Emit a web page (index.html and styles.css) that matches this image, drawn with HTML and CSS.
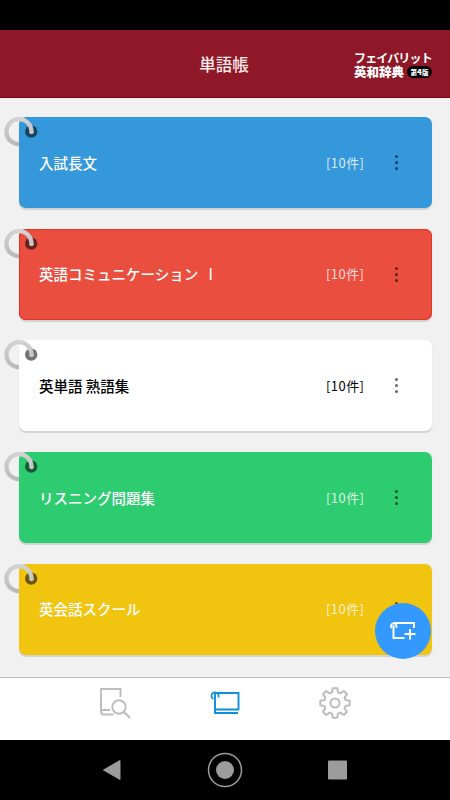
FILE: index.html
```html
<!DOCTYPE html>
<html lang="ja">
<head>
<meta charset="utf-8">
<title>単語帳</title>
<link rel="stylesheet" href="styles.css">
</head>
<body>
<svg width="0" height="0" class="defs">
  <defs>
    <linearGradient id="ringShade" x1="0" y1="0" x2="0" y2="1">
      <stop offset="0" stop-color="#d2d2d2"/><stop offset="1" stop-color="#bababa"/>
    </linearGradient>
    <symbol id="ring" viewBox="0 0 34 32">
      <circle class="hole" cx="27.2" cy="14.6" r="6.2"/>
      <path d="M27.5 15.2C27.5 7.600 22 2.200 14.700 2.200A12.400 12.400 0 1 0 15 27.100" fill="none" stroke="url(#ringShade)" stroke-width="4.300"/>
      <circle cx="27.5" cy="15.200" r="2.150" fill="#c8c8c8" fill-opacity="1"/>
    </symbol>
  </defs>
</svg>
<div class="status"></div>
<header class="header">
  <h1>単語帳</h1>
  <div class="brand">
    <div class="brand-top">フェイバリット</div>
    <div class="brand-bottom"><span>英和辞典</span><span class="edition">第<b>4</b>版</span></div>
  </div>
</header>
<main class="list">
  <article class="card blue">
    <svg class="ring"><use href="#ring"/></svg>
    <span class="title">入試長文</span><span class="count">[10件]</span><span class="more"><i></i><i></i><i></i></span>
  </article>
  <article class="card red">
    <svg class="ring"><use href="#ring"/></svg>
    <span class="title">英語コミュニケーション <span class="numeral">I</span></span><span class="count">[10件]</span><span class="more"><i></i><i></i><i></i></span>
  </article>
  <article class="card white">
    <svg class="ring"><use href="#ring"/></svg>
    <span class="title">英単語 熟語集</span><span class="count">[10件]</span><span class="more"><i></i><i></i><i></i></span>
  </article>
  <article class="card green">
    <svg class="ring"><use href="#ring"/></svg>
    <span class="title">リスニング問題集</span><span class="count">[10件]</span><span class="more"><i></i><i></i><i></i></span>
  </article>
  <article class="card yellow">
    <svg class="ring"><use href="#ring"/></svg>
    <span class="title">英会話スクール</span><span class="count">[10件]</span><span class="more"><i></i><i></i><i></i></span>
  </article>
  <div class="fab">
    <svg width="28" height="20" viewBox="0 0 28 20" fill="none" stroke="#fff" stroke-width="2">
      <path d="M4 2H25V7M4.500 4V17H15.500M21 8V18.500M15.500 13H26.500"/>
      <path d="M2.800 7.200A2.800 2.800 0 1 1 7.400 4.500V7" stroke-width="1.800"/>
    </svg>
  </div>
</main>
<nav class="tabs">
  <svg class="tab" width="32" height="32" viewBox="0 0 32 32" fill="none" stroke="#bdbdbd" stroke-width="1.900">
    <path d="M21.500 10V2H2V24.500Q2 27.500 5 27.500H14.500M2 25Q2 23 4.500 23H11"/>
    <circle cx="20" cy="20" r="6.700"/><path d="M25 25L31 31" stroke-width="2.300"/>
  </svg>
  <svg class="tab" width="32" height="32" viewBox="0 0 32 32" fill="none" stroke="#0f8edb" stroke-width="1.900">
    <path d="M6 6H29.500V22.500H6M6 6V26H29"/>
    <path d="M4.200 12A3.600 3.600 0 1 1 9.600 8.600V10.500" stroke-width="1.700"/>
  </svg>
  <svg class="tab" width="32" height="32" viewBox="-16 -16 32 32" fill="none" stroke="#bdbdbd" stroke-width="2" stroke-linejoin="round">
    <path d="M-2.300 -14.700H2.300L3 -10.600L5.400 -9.600L8.800 -12L12 -8.800L9.600 -5.400L10.600 -3L14.700 -2.300V2.300L10.600 3L9.600 5.400L12 8.800L8.800 12L5.400 9.600L3 10.600L2.300 14.700H-2.300L-3 10.600L-5.400 9.600L-8.800 12L-12 8.800L-9.600 5.400L-10.600 3L-14.700 2.300V-2.300L-10.600 -3L-9.600 -5.400L-12 -8.800L-8.800 -12L-5.400 -9.600L-3 -10.600Z"/>
    <circle r="4.500"/>
  </svg>
</nav>
<footer class="system">
  <svg width="36" height="36" viewBox="0 0 36 36"><path d="M8.500 18L25 8.500V27.500Z" fill="#9c9c9c" stroke="#9c9c9c" stroke-linejoin="round"/></svg>
  <svg width="36" height="36" viewBox="0 0 36 36"><circle cx="18" cy="18" r="16.500" fill="none" stroke="#9c9c9c" stroke-width="1.500"/><circle cx="18" cy="18" r="9" fill="#9c9c9c"/></svg>
  <svg width="36" height="36" viewBox="0 0 36 36"><rect x="8" y="8.500" width="19" height="19" rx="1" fill="#9c9c9c"/></svg>
</footer>
</body>
</html>
```
FILE: styles.css
```css
* { box-sizing: border-box; }
body {
  margin: 0;
  width: 450px;
  height: 800px;
  display: flex;
  flex-direction: column;
  overflow: hidden;
  background: #f1f1f1;
  font-family: "Noto Sans CJK JP", sans-serif;
}
.defs { position: absolute; }
.status { height: 30px; background: #000; }
.header {
  height: 68px;
  display: grid;
  grid-template-columns: 1fr auto 1fr;
  align-items: center;
  background: #8e1827;
  border-bottom: 1px solid #780610;
  color: #fff;
}
h1 {
  grid-column: 2;
  margin: 0;
  padding-right: 2px;
  font-size: 16.5px;
  line-height: 24px;
  font-weight: 500;
  color: #fae9eb;
}
.brand { justify-self: end; width: 96px; padding-top: 3px; font-weight: 700; }
.brand-top { font-size: 12px; line-height: 14px; letter-spacing: -.850px; white-space: nowrap; }
.brand-bottom { display: flex; align-items: center; gap: 3px; font-size: 12.5px; line-height: 14px; font-weight: 900; }
.edition {
  width: 25px;
  height: 12px;
  border-radius: 6px;
  background: #000;
  font-size: 6.5px;
  line-height: 12px;
  text-align: center;
  white-space: nowrap;
}
.edition b { font-size: 8px; }
.list {
  position: relative;
  height: 579px;
  padding: 19px 18.500px 0 19px;
  display: flex;
  flex-direction: column;
  gap: 20.700px;
}
.card {
  position: relative;
  flex: none;
  height: 91px;
  display: flex;
  align-items: center;
  padding-left: 20px;
  border-radius: 7px;
  box-shadow: 0 2px 1px #d2d2d2;
  color: #fff;
}
.blue { background: #3498db; }
.red { background: #e94e3f; box-shadow: inset 0 0 0 1px #e23527, 0 2px 1px #d2d2d2; }
.white { background: #fff; color: #000; }
.green { background: #2ecc71; }
.yellow { background: #f1c40f; }
.ring { position: absolute; left: -15px; top: 0; width: 34px; height: 32px; fill: #000; fill-opacity: .55; }
.title { flex: 1; padding-bottom: 1px; font-size: 14.500px; font-weight: 500; white-space: nowrap; }
.numeral { margin-left: 7px; font-family: Roboto, sans-serif; font-size: 16px; line-height: 1; font-weight: 400; }
.count { width: 60px; padding-bottom: 1px; font-size: 13px; letter-spacing: .450px; opacity: .8; font-weight: 400; }
.white .count { opacity: 1; }
.more { width: 45.500px; display: flex; flex-direction: column; align-items: flex-start; gap: 3px; padding-left: 9px; }
.more i { width: 3px; height: 3px; border-radius: 50%; background: rgba(0, 0, 0, .6); }
.fab {
  position: absolute;
  left: 375px;
  top: 504.500px;
  width: 56px;
  height: 56px;
  display: flex;
  align-items: center;
  justify-content: center;
  border-radius: 50%;
  background: #3399ff;
}
.tabs {
  height: 63px;
  display: flex;
  justify-content: center;
  gap: 78px;
  padding-top: 9px;
  border-top: 1px solid #bcbcbc;
  background: #fff;
}
.system {
  height: 60px;
  display: flex;
  align-items: center;
  justify-content: center;
  gap: 76.500px;
  background: #000;
}
```
